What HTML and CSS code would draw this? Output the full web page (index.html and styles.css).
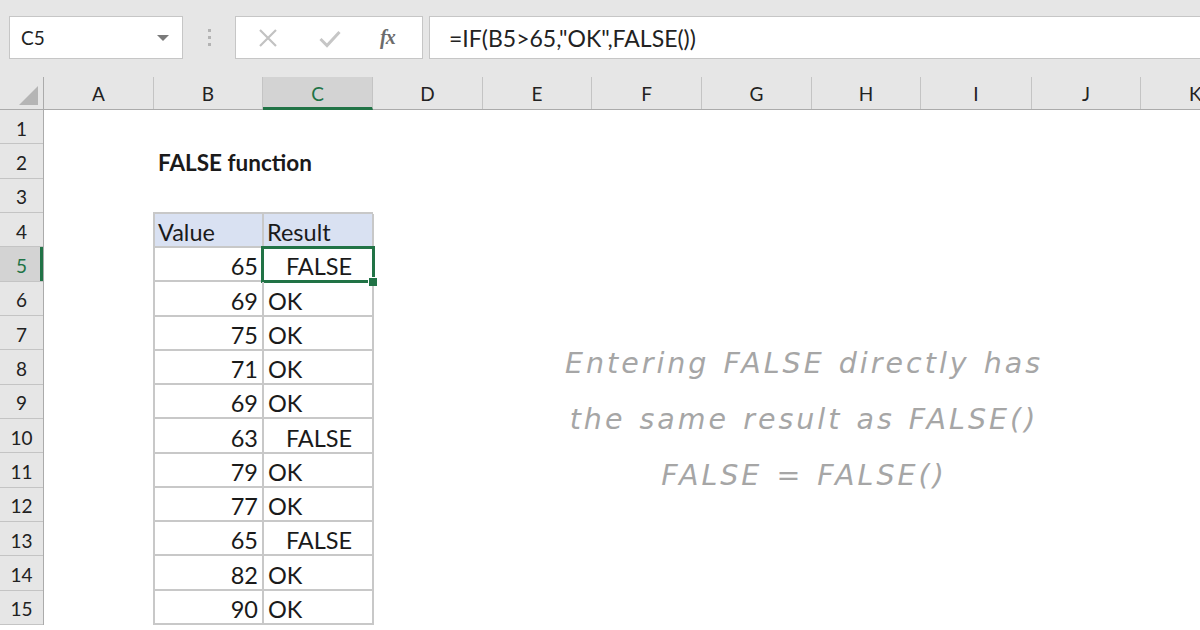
FILE: index.html
```html
<!DOCTYPE html>
<html>
<head>
<meta charset="utf-8">
<link rel="stylesheet" href="styles.css">
</head>
<body>
<div class="app">
  <div class="toolbar">
    <div class="namebox">
      <span class="name">C5</span>
      <svg class="caret" width="12" height="7" viewBox="0 0 12 7"><path d="M0 0 H12 L6 6 Z" fill="#7a7a7a"/></svg>
    </div>
    <div class="grip"><i></i><i></i><i></i></div>
    <div class="fxbox">
      <svg class="ico-x" width="20" height="20" viewBox="0 0 20 20"><path d="M2 2 L18 18 M18 2 L2 18" stroke="#c2c2c2" stroke-width="2.2" fill="none"/></svg>
      <svg class="ico-ok" width="22" height="18" viewBox="0 0 22 18"><path d="M1.5 9 L8 15.5 L20.5 2" stroke="#c6c6c6" stroke-width="3" fill="none"/></svg>
      <span class="fx">fx</span>
    </div>
    <div class="formula">=IF(B5&gt;65,"OK",FALSE())</div>
  </div>

  <div class="colheads">
    <div class="corner"><span class="tri"></span></div>
    <div class="ch w110">A</div>
    <div class="ch w109">B</div>
    <div class="ch w110 sel">C</div>
    <div class="ch w110">D</div>
    <div class="ch w109">E</div>
    <div class="ch w110">F</div>
    <div class="ch w110">G</div>
    <div class="ch w109">H</div>
    <div class="ch w111">I</div>
    <div class="ch w109">J</div>
    <div class="ch wrest">K</div>
  </div>

  <div class="body">
    <div class="rowheads">
      <div class="rh">1</div>
      <div class="rh">2</div>
      <div class="rh">3</div>
      <div class="rh">4</div>
      <div class="rh sel">5</div>
      <div class="rh">6</div>
      <div class="rh">7</div>
      <div class="rh">8</div>
      <div class="rh">9</div>
      <div class="rh">10</div>
      <div class="rh">11</div>
      <div class="rh">12</div>
      <div class="rh">13</div>
      <div class="rh">14</div>
      <div class="rh">15</div>
    </div>
    <div class="sheet">
      <div class="title">FALSE function</div>
      <div class="table">
        <div class="c hd first">Value</div><div class="c hd">Result</div>
        <div class="c num">65</div><div class="c bool active">FALSE</div>
        <div class="c num">69</div><div class="c txt">OK</div>
        <div class="c num">75</div><div class="c txt">OK</div>
        <div class="c num">71</div><div class="c txt">OK</div>
        <div class="c num">69</div><div class="c txt">OK</div>
        <div class="c num">63</div><div class="c bool">FALSE</div>
        <div class="c num">79</div><div class="c txt">OK</div>
        <div class="c num">77</div><div class="c txt">OK</div>
        <div class="c num">65</div><div class="c bool">FALSE</div>
        <div class="c num">82</div><div class="c txt">OK</div>
        <div class="c num">90</div><div class="c txt">OK</div>
      </div>
    </div>
  </div>

  <div class="note">Entering FALSE directly has<br>the same result as FALSE()<br>FALSE = FALSE()</div>
</div>
</body>
</html>
```

FILE: styles.css
```css
html, body {
  margin: 0;
  padding: 0;
  background: #ffffff;
}
.app {
  position: relative;
  width: 1200px;
  height: 630px;
  overflow: hidden;
  font-family: "Lato", "Liberation Sans", sans-serif;
  color: #1a1a1a;
}

/* ---------- toolbar ---------- */
.toolbar {
  height: 77px;
  background: #e6e6e6;
  display: flex;
  align-items: flex-start;
  padding: 16px 0 0 9px;
  box-sizing: border-box;
}
.namebox {
  width: 174px;
  height: 43px;
  box-sizing: border-box;
  background: #fff;
  border: 1px solid #c6c6c6;
  display: flex;
  align-items: center;
  justify-content: space-between;
  padding: 0 13px 0 11px;
}
.name {
  font-size: 19px;
  color: #222;
}
.caret { margin-top: 1px; }
.grip {
  width: 52px;
  height: 43px;
  display: flex;
  flex-direction: column;
  align-items: center;
  justify-content: center;
  gap: 4px;
}
.grip i {
  display: block;
  width: 3px;
  height: 3px;
  background: #b3b3b3;
}
.fxbox {
  width: 188px;
  height: 43px;
  box-sizing: border-box;
  background: #fff;
  border: 1px solid #c6c6c6;
  display: flex;
  align-items: center;
  padding: 0 0 0 22px;
}
.ico-x { margin-right: 41px; }
.ico-ok { margin-right: 39px; margin-top: 2px; }
.fx {
  font-family: "Liberation Serif", "DejaVu Serif", serif;
  font-style: italic;
  font-weight: bold;
  font-size: 20px;
  color: #6c6c6c;
  letter-spacing: -1px;
}
.formula {
  flex: 1;
  margin-left: 6px;
  height: 43px;
  box-sizing: border-box;
  background: #fff;
  border: 1px solid #c6c6c6;
  border-right: none;
  padding-left: 19px;
  display: flex;
  align-items: center;
  font-size: 23px;
  color: #222;
}

/* ---------- column headers ---------- */
.colheads {
  display: flex;
  height: 33px;
  background: #e6e6e6;
  border-bottom: 1px solid #ababab;
  box-sizing: border-box;
}
.corner {
  width: 44px;
  flex: none;
  position: relative;
  border-right: 1px solid #ababab;
  box-sizing: border-box;
}
.tri {
  position: absolute;
  right: 5px;
  bottom: 4px;
  width: 0;
  height: 0;
  border-left: 19px solid transparent;
  border-bottom: 19px solid #b5b5b5;
}
.ch {
  flex: none;
  box-sizing: border-box;
  border-right: 1px solid #c4c4c4;
  display: flex;
  align-items: center;
  justify-content: center;
  font-size: 19px;
  color: #222;
  height: 32px;
}
.ch.sel {
  background: #d3d3d3;
  color: #217346;
  border-bottom: 3px solid #217346;
  height: 33px;
  padding-top: 3px;
}
.w109 { width: 109px; }
.w110 { width: 110px; }
.w111 { width: 111px; }
.wrest { width: 80px; justify-content: flex-start; padding-left: 48px; }

/* ---------- body ---------- */
.body {
  display: flex;
}
.rowheads {
  width: 44px;
  flex: none;
  background: #e6e6e6;
  border-right: 1px solid #ababab;
  box-sizing: border-box;
  display: grid;
  grid-template-rows: repeat(15, 34.333px);
}
.rh {
  border-bottom: 1px solid #c4c4c4;
  display: flex;
  align-items: center;
  justify-content: center;
  padding-top: 3px;
  box-sizing: border-box;
  font-size: 19px;
  color: #222;
}
.rh.sel {
  background: #d3d3d3;
  color: #217346;
  box-shadow: inset -3px 0 0 #217346;
}
.sheet {
  flex: 1;
  display: grid;
  grid-template-columns: 110px 109px 110px 1fr;
  grid-template-rows: repeat(15, 34.333px);
}
.title {
  grid-column: 2 / 4;
  grid-row: 2;
  font-weight: bold;
  font-size: 22.5px;
  display: flex;
  align-items: center;
  padding: 3px 0 0 4px;
}
.table {
  grid-column: 2 / 4;
  grid-row: 4 / 16;
  display: grid;
  grid-template-columns: 109px 110px;
  grid-template-rows: repeat(12, 1fr);
  margin-left: -1px;
  border-left: 2px solid #c8c8c8;
  border-top: 2px solid #c8c8c8;
  box-sizing: border-box;
  margin-top: -1px;
}
.c {
  border-right: 2px solid #c8c8c8;
  border-bottom: 2px solid #c8c8c8;
  box-sizing: border-box;
  font-size: 23.5px;
  display: flex;
  align-items: center;
  padding: 4px 4px 0 4px;
  position: relative;
}
.hd { background: #d9e1f2; padding-left: 3px; }
.num { justify-content: flex-end; }
.txt { justify-content: flex-start; }
.bool { justify-content: center; padding-left: 6px; }
.active::after {
  content: "";
  position: absolute;
  left: -3px;
  top: -2px;
  right: -3px;
  bottom: -3px;
  border: 3px solid #217346;
}
.active::before {
  content: "";
  position: absolute;
  right: -5px;
  bottom: -6px;
  width: 8px;
  height: 8px;
  background: #217346;
  border-left: 1px solid #fff;
  border-top: 1px solid #fff;
  z-index: 2;
}

/* ---------- note ---------- */
.note {
  position: absolute;
  left: 454px;
  top: 336px;
  width: 700px;
  text-align: center;
  font-family: "DejaVu Sans", sans-serif;
  font-style: italic;
  font-size: 28.5px;
  letter-spacing: 3px;
  word-spacing: 2px;
  line-height: 56px;
  color: #a6a6a6;
}
```
